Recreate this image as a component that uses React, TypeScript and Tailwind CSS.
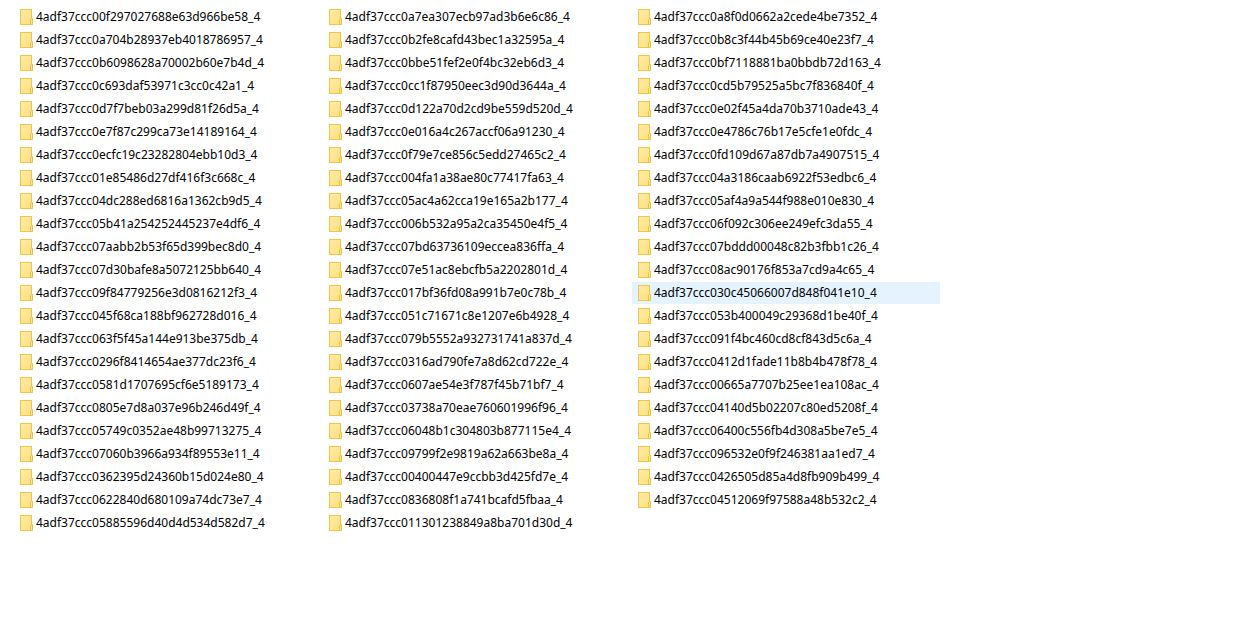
const columns = [
  [
    '4adf37ccc00f297027688e63d966be58_4',
    '4adf37ccc0a704b28937eb4018786957_4',
    '4adf37ccc0b6098628a70002b60e7b4d_4',
    '4adf37ccc0c693daf53971c3cc0c42a1_4',
    '4adf37ccc0d7f7beb03a299d81f26d5a_4',
    '4adf37ccc0e7f87c299ca73e14189164_4',
    '4adf37ccc0ecfc19c23282804ebb10d3_4',
    '4adf37ccc01e85486d27df416f3c668c_4',
    '4adf37ccc04dc288ed6816a1362cb9d5_4',
    '4adf37ccc05b41a254252445237e4df6_4',
    '4adf37ccc07aabb2b53f65d399bec8d0_4',
    '4adf37ccc07d30bafe8a5072125bb640_4',
    '4adf37ccc09f84779256e3d0816212f3_4',
    '4adf37ccc045f68ca188bf962728d016_4',
    '4adf37ccc063f5f45a144e913be375db_4',
    '4adf37ccc0296f8414654ae377dc23f6_4',
    '4adf37ccc0581d1707695cf6e5189173_4',
    '4adf37ccc0805e7d8a037e96b246d49f_4',
    '4adf37ccc05749c0352ae48b99713275_4',
    '4adf37ccc07060b3966a934f89553e11_4',
    '4adf37ccc0362395d24360b15d024e80_4',
    '4adf37ccc0622840d680109a74dc73e7_4',
    '4adf37ccc05885596d40d4d534d582d7_4',
  ],
  [
    '4adf37ccc0a7ea307ecb97ad3b6e6c86_4',
    '4adf37ccc0b2fe8cafd43bec1a32595a_4',
    '4adf37ccc0bbe51fef2e0f4bc32eb6d3_4',
    '4adf37ccc0cc1f87950eec3d90d3644a_4',
    '4adf37ccc0d122a70d2cd9be559d520d_4',
    '4adf37ccc0e016a4c267accf06a91230_4',
    '4adf37ccc0f79e7ce856c5edd27465c2_4',
    '4adf37ccc004fa1a38ae80c77417fa63_4',
    '4adf37ccc05ac4a62cca19e165a2b177_4',
    '4adf37ccc006b532a95a2ca35450e4f5_4',
    '4adf37ccc07bd63736109eccea836ffa_4',
    '4adf37ccc07e51ac8ebcfb5a2202801d_4',
    '4adf37ccc017bf36fd08a991b7e0c78b_4',
    '4adf37ccc051c71671c8e1207e6b4928_4',
    '4adf37ccc079b5552a932731741a837d_4',
    '4adf37ccc0316ad790fe7a8d62cd722e_4',
    '4adf37ccc0607ae54e3f787f45b71bf7_4',
    '4adf37ccc03738a70eae760601996f96_4',
    '4adf37ccc06048b1c304803b877115e4_4',
    '4adf37ccc09799f2e9819a62a663be8a_4',
    '4adf37ccc00400447e9ccbb3d425fd7e_4',
    '4adf37ccc0836808f1a741bcafd5fbaa_4',
    '4adf37ccc011301238849a8ba701d30d_4',
  ],
  [
    '4adf37ccc0a8f0d0662a2cede4be7352_4',
    '4adf37ccc0b8c3f44b45b69ce40e23f7_4',
    '4adf37ccc0bf7118881ba0bbdb72d163_4',
    '4adf37ccc0cd5b79525a5bc7f836840f_4',
    '4adf37ccc0e02f45a4da70b3710ade43_4',
    '4adf37ccc0e4786c76b17e5cfe1e0fdc_4',
    '4adf37ccc0fd109d67a87db7a4907515_4',
    '4adf37ccc04a3186caab6922f53edbc6_4',
    '4adf37ccc05af4a9a544f988e010e830_4',
    '4adf37ccc06f092c306ee249efc3da55_4',
    '4adf37ccc07bddd00048c82b3fbb1c26_4',
    '4adf37ccc08ac90176f853a7cd9a4c65_4',
    '4adf37ccc030c45066007d848f041e10_4',
    '4adf37ccc053b400049c29368d1be40f_4',
    '4adf37ccc091f4bc460cd8cf843d5c6a_4',
    '4adf37ccc0412d1fade11b8b4b478f78_4',
    '4adf37ccc00665a7707b25ee1ea108ac_4',
    '4adf37ccc04140d5b02207c80ed5208f_4',
    '4adf37ccc06400c556fb4d308a5be7e5_4',
    '4adf37ccc096532e0f9f246381aa1ed7_4',
    '4adf37ccc0426505d85a4d8fb909b499_4',
    '4adf37ccc04512069f97588a48b532c2_4',
  ],
]

const highlighted = '4adf37ccc030c45066007d848f041e10_4'

function FolderIcon() {
  return (
    <svg width="13" height="16" viewBox="0 0 13 16" className="shrink-0" aria-hidden="true">
      <defs>
        <linearGradient id="folder" x1="0" y1="0" x2="1" y2="1">
          <stop offset="0" stopColor="#ffeba6" />
          <stop offset="1" stopColor="#ffe07f" />
        </linearGradient>
      </defs>
      <rect x="0.5" y="0.5" width="11" height="15" fill="url(#folder)" stroke="#ebc84d" />
      <path d="M10.5 15.5v-5l1-1h1v6z" fill="#ffe48e" stroke="#e8c343" />
    </svg>
  )
}

function FolderRow({ name }: { name: string }) {
  const active = name === highlighted
  return (
    <li className={`flex h-[22px] items-center gap-[3px] pl-1.5 ${active ? 'bg-[#e5f3ff]' : 'hover:bg-[#e5f3ff]'}`}>
      <FolderIcon />
      <span className="whitespace-nowrap">{name}</span>
    </li>
  )
}

export default function App() {
  return (
    <main className="min-h-screen overflow-x-auto bg-white font-['Noto_Sans','Open_Sans',sans-serif] text-xs text-black">
      <div className="flex items-start gap-px px-3.5 py-1.5">
        {columns.map((names, i) => (
          <ul key={i} className="flex w-[308px] shrink-0 flex-col gap-px">
            {names.map((name) => (
              <FolderRow key={name} name={name} />
            ))}
          </ul>
        ))}
      </div>
    </main>
  )
}
